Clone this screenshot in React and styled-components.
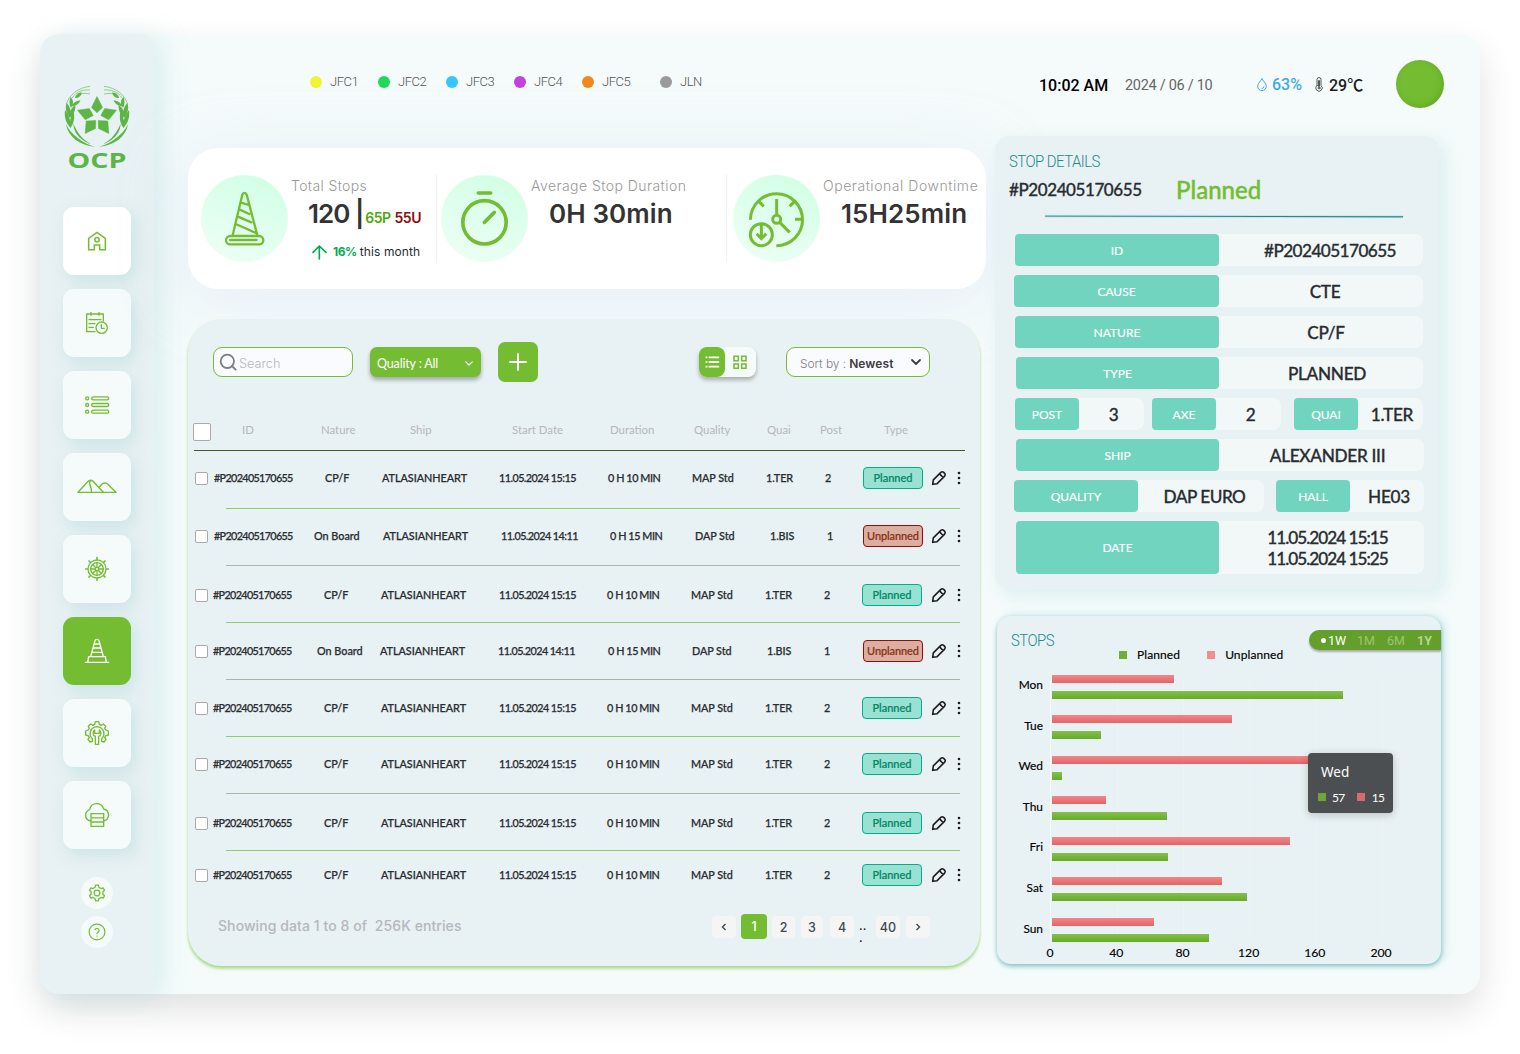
import React from "react";
import styled, { createGlobalStyle, css } from "styled-components";

const green = "#74bd32";
const geo = `"Lato", "Open Sans", sans-serif`;
const wide = `"Inter", "Open Sans", sans-serif`;
const robo = `"Roboto", "Noto Sans CJK SC", sans-serif`;

const Global = createGlobalStyle`
  *, *::before, *::after { box-sizing: border-box; }
  body { margin: 0; background: #fff; font-family: ${geo}; }
  button { border: 0; padding: 0; font: inherit; background: none; cursor: pointer; }
  svg { display: block; overflow: visible; flex: none; }
`;

const Page = styled.div`
  height: 1054px;
  padding: 34px 40px;
  overflow: hidden;
`;
const Shell = styled.div`
  display: flex;
  width: 1440px;
  height: 960px;
  border-radius: 20px;
  background: #f5fbfb;
  box-shadow: 0 16px 36px rgba(0, 0, 0, 0.12);
`;

/* ---------- sidebar ---------- */
const Sidebar = styled.aside`
  flex: none;
  width: 114px;
  height: 960px;
  display: flex;
  flex-direction: column;
  align-items: center;
  padding-top: 51px;
  border-radius: 20px 12px 12px 20px;
  background: #e8f1f3;
  box-shadow: 8px 4px 26px rgba(165, 215, 218, 0.34);
`;
const NavList = styled.nav`
  display: flex;
  flex-direction: column;
  gap: 14px;
  margin-top: 38px;
`;
const NavButton = styled.button`
  width: 68px;
  height: 68px;
  display: grid;
  place-items: center;
  border-radius: 11px;
  color: ${(p) => (p.$active ? "#fff" : green)};
  background: ${(p) => (p.$active ? green : p.$solid ? "#fff" : "#f5fbfb")};
  box-shadow: 4px 6px 16px rgba(150, 205, 208, 0.34);
`;
const SmallList = styled.div`
  display: flex;
  flex-direction: column;
  gap: 7px;
  margin-top: 28px;
`;
const RoundButton = styled.button`
  width: 32px;
  height: 32px;
  display: grid;
  place-items: center;
  border-radius: 50%;
  color: ${green};
  background: #f5fbfb;
`;

/* ---------- header ---------- */
const Main = styled.main`
  flex: 1;
  display: flex;
  flex-direction: column;
`;
const Header = styled.header`
  height: 102px;
  display: flex;
  align-items: center;
  padding: 0 36px 2px 156px;
  font-family: ${robo};
`;
const Legend = styled.div`
  display: grid;
  grid-template-columns: repeat(4, 68px) 78px auto;
  margin-top: -4px;
  width: 729px;
`;
const LegendItem = styled.span`
  display: flex;
  align-items: center;
  gap: 8px;
  font-size: 13px;
  line-height: 16px;
  font-weight: 300;
  letter-spacing: -0.5px;
  color: #555;
  &::before {
    content: "";
    width: 12px;
    height: 12px;
    border-radius: 50%;
    background: ${(p) => p.$c};
  }
`;
const Clock = styled.span`
  width: 86px;
  padding-top: 3px;
  font-size: 16px;
  font-weight: 500;
  letter-spacing: 0;
  color: #000;
  white-space: nowrap;
`;
const DateText = styled.span`
  width: 132px;
  padding-top: 2px;
  font-size: 14.5px;
  letter-spacing: -0.3px;
  color: #666;
`;
const Meter = styled.span`
  display: flex;
  align-items: center;
  gap: ${(p) => p.$gap}px;
  width: ${(p) => p.$w}px;
  font-size: 16px;
  font-weight: 500;
  white-space: nowrap;
  color: ${(p) => p.$c};
`;
const Avatar = styled.span`
  flex: none;
  width: 48px;
  height: 48px;
  border-radius: 50%;
  margin-left: auto;
  background: ${green};
  box-shadow: inset -2px -2px 6px rgba(60, 120, 10, 0.25);
`;

/* ---------- content ---------- */
const Content = styled.div`
  display: flex;
  padding-left: 34px;
`;
const LeftColumn = styled.div`
  width: 798px;
  margin-top: 12px;
`;
const RightColumn = styled.div`
  margin-left: 9px;
`;

const Stats = styled.section`
  display: grid;
  grid-template-columns: 249px 290px auto;
  height: 141px;
  padding-top: 27px;
  border-radius: 30px;
  background: #fff;
  box-shadow: 0 10px 60px rgba(215, 226, 246, 0.5);
  font-family: ${wide};
`;
const Stat = styled.div`
  display: flex;
  height: 88px;
  padding-left: ${(p) => p.$pl}px;
  border-right: ${(p) => (p.$last ? 0 : "1px solid #f0f0f0")};
`;
const StatDisc = styled.div`
  flex: none;
  width: 87px;
  height: 87px;
  border-radius: 50%;
  background: linear-gradient(200deg, #cfffe4 0%, #effff7 100%);
  color: ${green};
`;
const StatBody = styled.div`
  padding-left: 3px;
  white-space: nowrap;
`;
const StatLabel = styled.div`
  font-size: 14px;
  line-height: 22px;
  font-weight: 300;
  letter-spacing: ${(p) => p.$ls || 0}px;
  color: #999;
`;
const StatValue = styled.div`
  display: flex;
  align-items: baseline;
  padding-left: ${(p) => p.$pl}px;
  font-size: 26px;
  line-height: 34px;
  font-weight: 600;
  letter-spacing: ${(p) => p.$ls}px;
  color: #333;
`;
const Split = styled.span`
  margin-left: ${(p) => p.$ml}px;
  font-size: 14px;
  font-weight: 600;
  letter-spacing: -0.5px;
  color: ${(p) => p.$c};
`;
const Trend = styled.div`
  display: flex;
  align-items: center;
  margin-top: 7px;
  padding-left: 21px;
  font-size: 12px;
  line-height: 20px;
  letter-spacing: 0.12px;
  color: #292d32;
  b {
    margin: 0 3px 0 6px;
    letter-spacing: -0.5px;
    color: #00ac4f;
  }
`;

/* ---------- table panel ---------- */
const TablePanel = styled.section`
  width: 792px;
  height: 647px;
  margin-top: 30px;
  padding-top: 23px;
  border-radius: 34px;
  background: #e8f1f3;
  box-shadow: 0 3px 3px rgba(116, 189, 50, 0.45), 0 1px 2px rgba(116, 189, 50, 0.2);
`;
const Toolbar = styled.div`
  display: flex;
  align-items: center;
  height: 40px;
  padding-left: 25px;
  font-family: ${wide};
`;
const SearchBox = styled.div`
  width: 140px;
  height: 30px;
  display: flex;
  align-items: center;
  gap: 1px;
  padding: 1px 0 0 5px;
  border: 1px solid ${green};
  border-radius: 9px;
  background: #fafbff;
  font-size: 12.7px;
  font-weight: 300;
  color: #b5b7c0;
`;
const SearchHint = styled.span`
  padding-top: 2px;
`;
const QualityButton = styled.button`
  width: 111px;
  height: 30px;
  display: flex;
  align-items: center;
  justify-content: space-between;
  margin-left: 17px;
  padding: 2px 8px 0 7px;
  border-radius: 7px;
  background: ${green};
  box-shadow: 0 3px 4px rgba(0, 0, 0, 0.3);
  font-family: ${geo};
  font-size: 12.5px;
  color: #fff;
  letter-spacing: -0.15px;
`;
const AddButton = styled.button`
  width: 40px;
  height: 40px;
  display: grid;
  place-items: center;
  margin-left: 17px;
  border-radius: 7px;
  background: ${green};
`;
const Toggle = styled.div`
  display: flex;
  width: 57px;
  height: 30px;
  margin-left: 161px;
  border-radius: 8px;
  background: #f5fbfb;
  box-shadow: 0 3px 4px rgba(0, 0, 0, 0.28);
`;
const ToggleButton = styled.button`
  width: ${(p) => (p.$on ? 26 : 29)}px;
  display: grid;
  place-items: center;
  border-radius: 8px;
  background: ${(p) => (p.$on ? green : "transparent")};
`;
const SortBox = styled.div`
  width: 144px;
  height: 30px;
  display: flex;
  align-items: center;
  margin-left: 30px;
  padding: 2px 0 0 13px;
  border: 1px solid ${green};
  border-radius: 9px;
  background: #fafbff;
  font-size: 12px;
  font-weight: 300;
  letter-spacing: -0.05px;
  color: #7e7e7e;
  b {
    margin: 0 17px 0 3px;
    font-weight: 600;
    letter-spacing: 0.1px;
    color: #3d3c42;
  }
  svg { margin-top: -3px; }
`;

const HeadRow = styled.div`
  display: grid;
  grid-template-columns: ${(p) => p.$cols};
  align-items: center;
  height: 69px;
  margin: 0 15px 0 6px;
  padding-top: 26px;
  border-bottom: 1px solid #3f5a22;
  font-size: 11.4px;
  color: #b5b7c0;
`;
const Check = styled.span`
  width: ${(p) => p.$s}px;
  height: ${(p) => p.$s}px;
  border: 1px solid #aaa;
  border-radius: 2px;
  background: #fff;
`;
const HeadCheck = styled(Check)`
  margin: 6px 0 0 -1px;
`;
const HeadCell = styled.span`
  white-space: nowrap;
`;
const RowWrap = styled.div`
  height: ${(p) => (p.$first ? 58 : 57)}px;
  display: flex;
  flex-direction: column;
  justify-content: space-between;
`;
const Row = styled.div`
  display: grid;
  grid-template-columns: ${(p) => p.$cols};
  align-items: center;
  height: 22px;
  margin: ${(p) => p.$top}px 0 0 7px;
`;
const Rule = styled.div`
  height: 1px;
  margin: 0 20px 0 38px;
  background: ${(p) => (p.$soft ? "#a3b9a9" : "#8dce68")};
`;
const Cell = styled.span`
  padding-bottom: 1px;
  font-size: 10.8px;
  font-weight: 500;
  letter-spacing: ${(p) => p.$ls}px;
  white-space: nowrap;
  color: #292d32;
  -webkit-text-stroke: 0.25px #292d32;
`;
const Badge = styled.span`
  width: 60px;
  height: 22px;
  display: flex;
  align-items: center;
  justify-content: center;
  padding-bottom: 1px;
  border-radius: 4px;
  font-size: 11px;
  font-weight: 500;
  white-space: nowrap;
  -webkit-text-stroke: 0.2px currentColor;
  ${(p) =>
    p.$bad
      ? css`
          border: 1px solid #960b0b;
          background: #dbaea2;
          color: #8b3013;
          letter-spacing: -0.1px;
        `
      : css`
          border: 1px solid #00b087;
          background: #99e1d2;
          color: #008767;
        `}
`;

const Footer = styled.footer`
  display: flex;
  align-items: flex-start;
  padding: 6px 0 0 30px;
  font-family: ${wide};
`;
const Summary = styled.span`
  width: 494px;
  margin-top: 2px;
  font-size: 14px;
  line-height: 20px;
  font-weight: 500;
  letter-spacing: 0.08px;
  white-space: pre;
  color: #b5b7c0;
`;
const PageButton = styled.button`
  width: ${(p) => p.$w || 24}px;
  height: ${(p) => (p.$on ? 25 : 22)}px;
  display: grid;
  place-items: center;
  margin: ${(p) => (p.$on ? 0 : 2)}px ${(p) => p.$mr || 0}px 0 0;
  border-radius: 4px;
  background: ${(p) => (p.$on ? green : "#f5f5f5")};
  color: ${(p) => (p.$on ? "#fff" : "#404b52")};
  font-size: 12.5px;
  font-weight: 500;
`;
const Ellipsis = styled.span`
  width: 17px;
  font-size: 12px;
  font-weight: 500;
  line-height: 12px;
  margin: 6px 0 0 -1px;
  color: #222;
`;

/* ---------- details panel ---------- */
const DetailPanel = styled.section`
  width: 444px;
  height: 453px;
  padding: 16px 15px 0 14px;
  border-radius: 14px;
  background: #e8f1f3;
  box-shadow: 6px 6px 18px rgba(165, 215, 218, 0.34);
`;
const PanelTitle = styled.h2`
  margin: 0;
  font-family: ${robo};
  font-size: 16px;
  line-height: ${(p) => p.$lh || 20}px;
  font-weight: 300;
  letter-spacing: -0.55px;
  color: #1c8a8c;
  transform: scaleX(0.93);
  transform-origin: left;
`;
const DetailHead = styled.div`
  display: flex;
  align-items: center;
  height: 36px;
`;
const StopId = styled.span`
  width: 167px;
  padding-bottom: 1px;
  font-size: 17px;
  font-weight: 500;
  letter-spacing: -0.42px;
  color: #292d32;
  -webkit-text-stroke: 0.3px #292d32;
`;
const Status = styled.span`
  padding-bottom: 1px;
  font-size: 24px;
  font-weight: 500;
  color: ${green};
  -webkit-text-stroke: 0.4px ${green};
`;
const Slant = styled.div`
  width: 358px;
  height: 1px;
  margin: 8px 0 17px 36px;
  background: linear-gradient(90deg, #3b9ba4, #087f8b);
  box-shadow: 0 0 1px #087f8b;
  transform: rotate(0.12deg);
`;
const Fields = styled.div`
  display: flex;
  flex-direction: column;
  gap: 9px;
  padding-left: 5px;
`;
const FieldLine = styled.div`
  display: flex;
`;
const Field = styled.div`
  display: flex;
  width: ${(p) => p.$w}px;
  height: ${(p) => p.$h || 32}px;
  margin-left: ${(p) => p.$ml || 0}px;
  border-radius: 8px;
  background: #f2f8f8;
`;
const FieldLabel = styled.span`
  flex: none;
  width: ${(p) => p.$w}px;
  display: grid;
  place-items: center;
  border-radius: 4px;
  background: #71d4be;
  font-size: 12px;
  color: #fff;
  -webkit-text-stroke: 0.15px #fff;
`;
const FieldValue = styled.span`
  flex: 1;
  display: flex;
  align-items: center;
  justify-content: center;
  padding-left: ${(p) => p.$pl ?? 8}px;
  font-size: 17.2px;
  line-height: 21px;
  font-weight: 500;
  letter-spacing: ${(p) => p.$ls ?? -0.3}px;
  text-align: center;
  white-space: pre-line;
  color: #292d32;
  -webkit-text-stroke: 0.3px #292d32;
`;

/* ---------- stops chart ---------- */
const ChartPanel = styled.section`
  position: relative;
  width: 444px;
  height: 348px;
  margin: 27px 0 0 2px;
  padding-top: 14px;
  border-radius: 14px;
  background: #e8f1f3;
  box-shadow: 0 2px 4px rgba(8, 127, 139, 0.42), 3px 0 10px rgba(140, 205, 210, 0.45);
`;
const ChartHead = styled.div`
  display: flex;
  justify-content: space-between;
  padding-left: 14px;
  height: 20px;
`;
const RangePill = styled.div`
  display: flex;
  align-items: center;
  width: 132px;
  height: 20px;
  padding-left: 12px;
  border-radius: 10px 0 0 10px;
  background: #649f2b;
  box-shadow: 0 2px 2px rgba(0, 0, 0, 0.28);
  font-family: ${robo};
`;
const RangeItem = styled.span`
  width: ${(p) => p.$w}px;
  font-size: 12.5px;
  font-weight: ${(p) => (p.$bold ? 700 : 400)};
  color: ${(p) => (p.$on ? "#fff" : p.$bold ? "#b4d690" : "#9cc572")};
`;
const Dot = styled.i`
  width: 5px;
  height: 5px;
  margin-right: 2px;
  border-radius: 50%;
  background: #fff;
`;
const Series = styled.div`
  display: flex;
  align-items: center;
  height: 16px;
  margin: -3px 0 0 122px;
  padding-bottom: 1px;
  font-size: 12px;
  letter-spacing: 0.1px;
  color: #000;
  -webkit-text-stroke: 0.15px #000;
`;
const Swatch = styled.i`
  width: 8px;
  height: 8px;
  margin: 0 ${(p) => p.$mr}px 0 ${(p) => p.$ml || 0}px;
  background: ${(p) => p.$c};
`;
const Plot = styled.div`
  margin-top: 11px;
  background: ${() =>
    `linear-gradient(#f5fbfb, #f5fbfb) 53px 6px / 1px 260px no-repeat,
     repeating-linear-gradient(90deg, #ecf4f5 0 1px, transparent 1px 66.2px) 119.5px 6px / 266px 260px no-repeat`};
`;
const DayRow = styled.div`
  display: flex;
  height: 40.6px;
`;
const Day = styled.span`
  width: 46px;
  margin-right: 9px;
  padding-top: 3px;
  font-size: 11.9px;
  line-height: 16px;
  text-align: right;
  color: #000;
  -webkit-text-stroke: 0.15px #000;
`;
const Bars = styled.div`
  display: flex;
  flex-direction: column;
  gap: 8px;
  padding-top: 0.5px;
`;
const Bar = styled.i`
  height: 8px;
  background: ${(p) =>
    p.$red ? "linear-gradient(#f38588, #e36567)" : "linear-gradient(#84c04a, #68aa2c)"};
`;
const Axis = styled.div`
  display: grid;
  grid-template-columns: repeat(6, 66.2px);
  margin: -13px 0 0 20px;
  font-size: 12.2px;
  line-height: 16px;
  text-align: center;
  color: #000;
  -webkit-text-stroke: 0.15px #000;
`;
const Tooltip = styled.div`
  position: absolute;
  left: 311px;
  top: 137px;
  width: 85px;
  height: 60px;
  padding: 10px 0 0 10px;
  border-radius: 4px;
  background: #4b4f51;
  box-shadow: 0 2px 8px rgba(0, 0, 0, 0.2);
  color: #fff;
`;
const TipTitle = styled.div`
  padding-left: 3px;
  font-family: "Noto Sans", sans-serif;
  font-size: 13.5px;
  line-height: 18px;
`;
const TipValues = styled.div`
  display: flex;
  align-items: center;
  height: 16px;
  margin-top: 8px;
  font-size: 12px;
  letter-spacing: -0.6px;
`;

/* ---------- drawings ---------- */
const Stroke = ({ size = 24, h, box = "0 0 72 72", w = 4, children }) => (
  <svg width={size} height={h || size} viewBox={box} fill="none" stroke="currentColor" strokeWidth={w} strokeLinecap="round" strokeLinejoin="round">
    {children}
  </svg>
);

const gearPath = (c, teeth, rOut, rIn) => {
  const pts = [];
  const step = (Math.PI * 2) / teeth;
  for (let i = 0; i < teeth; i++) {
    const a = i * step - Math.PI / 2;
    [[-0.3, rIn], [-0.17, rOut], [0.17, rOut], [0.3, rIn]].forEach(([o, r]) => {
      pts.push(`${(c + r * Math.cos(a + o * step)).toFixed(1)} ${(c + r * Math.sin(a + o * step)).toFixed(1)}`);
    });
  }
  return `M${pts.join("L")}Z`;
};
const rays = (c, n, r1, r2) =>
  Array.from({ length: n }, (_, i) => {
    const a = (i * Math.PI * 2) / n;
    return `M${c + r1 * Math.cos(a)} ${c + r1 * Math.sin(a)}L${c + r2 * Math.cos(a)} ${c + r2 * Math.sin(a)}`;
  }).join("");

const Wreath = () => (
  <>
    <path d="M95 146.8C80 145.500 68.500 137.500 65.800 124C71.500 135 82 143 95 146.800Z" />
    <path d="M89 143.500C79 139 73.500 132 73.300 123.500C77.500 133 82 139.500 90.500 143.500Z" />
    <path d="M65 110C69 115 71 120 70.500 128C66 123 64 117 65 110ZM73.500 111C75 118 74 123 70.500 128C69.500 121 70.500 115 73.500 111Z" />
    <path d="M66.500 103C70.500 107 71.500 111 70 118C66 113 65 108 66.500 103ZM75.500 105C75.500 110 74 114 70 117.500C69.500 111 71.500 107.500 75.500 105Z" />
    <path d="M70.500 97C74 100 73.500 104 71 108C69 104 69 101 70.500 97ZM80.500 100.500C79 104 75.500 106 71.500 106.500C73 103 76 100.500 80.500 100.500Z" />
    <path d="M75 98C75.500 94.500 78.500 92.500 81.800 92.500C81.500 96 78.500 98 75 98Z" />
    <path d="M66.500 104C69 95 78 87.500 90 86.400M72 98C76 91.500 83 89.500 90 90M80 94C83 93 87 93.300 90 94" fill="none" stroke="#5cb544" strokeWidth="0.6" />
  </>
);
const Logo = () => (
  <svg width="66" height="84" viewBox="64 85 66 84" fill="#5cb544">
    <Wreath />
    <g transform="translate(194 0) scale(-1 1)"><Wreath /></g>
    <g stroke="#5cb544" strokeWidth="0.5">
      <path d="M97 96.500L102.500 107.500L97 112.800L91.500 107.500Z" />
      <path d="M77.500 110.200L89.300 108.500L93.200 115.600L85.300 119.800Z" />
      <path d="M116.500 110.200L104.700 108.500L100.800 115.600L108.700 119.800Z" />
      <path d="M85.200 133.500L86.200 121L95.800 120.600L95.500 128.500Z" />
      <path d="M108.800 133.500L107.800 121L98.200 120.600L98.500 128.500Z" />
    </g>
    <text x="67.500" y="167.700" fontFamily="Open Sans, sans-serif" fontWeight="700" fontSize="21.800" textLength="59" lengthAdjust="spacingAndGlyphs">OCP</text>
  </svg>
);

const navItems = [
  { key: "home", solid: true, icon: (
    <Stroke w={4.6}><path strokeLinejoin="miter" d="M11 62V28L36 10L61 28V62H44V48H28V62Z" /><circle cx="36" cy="32" r="6.500" /></Stroke>
  ) },
  { key: "planning", icon: (
    <Stroke><path d="M30 62H5V9H55V30M18 4V13M42 4V13M12 26H48M12 38H30M12 49H25" /><circle cx="50" cy="50" r="17" /><path d="M49 41V52H58" /></Stroke>
  ) },
  { key: "list", icon: (
    <Stroke>{[16, 36, 56].map((y) => <g key={y}><circle cx="6.500" cy={y} r="4.500" /><rect x="20" y={y - 4.5} width="51" height="9" rx="4.500" /></g>)}</Stroke>
  ) },
  { key: "terrain", icon: (
    <Stroke size={40} h={24} box="0 0 120 72" w={4.200}><path d="M3 52L32 20Q40 12 48 19L79 52M67 37L73 29Q83 19 94 29L117 52H3M39 17C33 31 46 34 43 52" /></Stroke>
  ) },
  { key: "helm", icon: (
    <Stroke><circle cx="36" cy="36" r="27" /><circle cx="36" cy="36" r="19" /><circle cx="36" cy="36" r="5" /><path d={rays(36, 8, 6, 19)} /><path strokeWidth="5" d={rays(36, 8, 29, 34)} /></Stroke>
  ) },
  { key: "stops", active: true, icon: (
    <Stroke><path d="M1 70H71M8 70L11 53H61L64 70M17 53L30 5Q31 1 36 1Q41 1 42 5L55 53M28 15H44M25 27H47M21 40H51" /></Stroke>
  ) },
  { key: "maintenance", icon: (
    <Stroke>
      <path d="M22 61L15 63L9 55L13 49L9 44L2 42V30L9 27L13 22L10 16L17 9L24 13L29 10L31 2H41L43 10L48 13L55 9L62 16L59 22L63 27L70 30V42L63 44L59 49L63 55L57 63L50 61" />
      <path d="M22 61V53C11 44 13 19 36 17C59 19 61 44 50 53V61" />
      <path d="M31 70V46C22 43 23 32 29 27V37H43V27C49 32 50 43 41 46V70Z" />
    </Stroke>
  ) },
  { key: "storage", icon: (
    <Stroke><path d="M18 54C6 52 1.500 45 2 36C2.500 28 8 22 14 20C17 7 26 2 35 2C45 2 53 8 56 18C66 20 70.500 28 70.500 37C70 46 65 52 56 54" /><path strokeLinejoin="miter" d="M18 32H56V70H18ZM18 44.500H56M18 57H56" /></Stroke>
  ) },
];

const StatIcon = ({ box, w, children }) => <Stroke size={87} box={box} w={w}>{children}</Stroke>;

const Pencil = () => (
  <svg width="16" height="16" viewBox="0 0 24 24" fill="none" stroke="#1d1d1f" strokeWidth="2.400" strokeLinejoin="round" strokeLinecap="round">
    <path d="M2.500 21.500L3.500 14.800L14.800 3.500Q17 1.800 19 3.500L20.500 5Q22.200 7 20.500 9.200L9.200 20.500ZM12.800 5.800L18.200 11.200" />
  </svg>
);
const Kebab = () => (
  <svg width="4" height="14" viewBox="0 0 4 14" fill="#1d1d1f"><circle cx="2" cy="2" r="1.300" /><circle cx="2" cy="7" r="1.300" /><circle cx="2" cy="12" r="1.300" /></svg>
);
const Chevron = ({ w, sw, c }) => (
  <svg width={w} height={w * 0.6} viewBox="0 0 10 6" fill="none" stroke={c} strokeWidth={sw} strokeLinecap="round" strokeLinejoin="round"><path d="M1 1L5 5L9 1" /></svg>
);
const PageArrow = ({ d }) => (
  <svg width="6" height="8" viewBox="0 0 6 8" fill="none" stroke="#404b52" strokeWidth="1.400"><path d={d} /></svg>
);

/* column widths from the x positions at which the columns start */
const template = (starts, origin) =>
  [origin, ...starts].map((s, i) => (i < starts.length ? `${starts[i] - s}px` : "auto")).join(" ");

const headings = ["ID", "Nature", "Ship", "Start Date", "Duration", "Quality", "Quai", "Post", "Type"];
const headStarts = [242, 321, 410, 512, 610, 694, 767, 820, 884];

const startSets = {
  a: [214, 325, 382, 499, 608, 692, 766, 825, 863, 931, 957],
  b: [214, 314, 383, 501, 610, 695, 770, 827, 863, 931, 957],
  c: [213, 324, 381, 499, 607, 691, 765, 824, 862, 931, 957],
  d: [213, 317, 380, 498, 608, 692, 767, 824, 863, 931, 957],
};
const spacing = [-0.66, 0, -0.02, -0.55, -0.42, -0.05, -0.1, 0];
const planned = ["#P202405170655", "CP/F", "ATLASIANHEART", "11.05.2024 15:15", "0 H 10 MIN", "MAP Std", "1.TER", "2"];
const unplanned = ["#P202405170655", "On Board", "ATLASIANHEART", "11.05.2024 14:11", "0 H 15 MIN", "DAP Std", "1.BIS", "1"];
const rows = [
  { set: "a", top: 16 },
  { set: "b", top: 16, bad: true },
  { set: "c", top: 18 },
  { set: "d", top: 17, bad: true },
  { set: "c", top: 17 },
  { set: "c", top: 16 },
  { set: "c", top: 18 },
  { set: "c", top: 13 },
];

const days = [
  ["Mon", 122, 290.5],
  ["Tue", 180, 49],
  ["Wed", 270, 10],
  ["Thu", 54, 115],
  ["Fri", 238, 116],
  ["Sat", 170, 195],
  ["Sun", 102, 157],
];

const DetailField = ({ label, value, w, lw, h, ml, ls, pl }) => (
  <Field $w={w} $h={h} $ml={ml}>
    <FieldLabel $w={lw}>{label}</FieldLabel>
    <FieldValue $ls={ls} $pl={pl}>{value}</FieldValue>
  </Field>
);

export default function App() {
  return (
    <Page>
      <Global />
      <Shell>
        <Sidebar>
          <Logo />
          <NavList>
            {navItems.map((n) => (
              <NavButton key={n.key} $active={n.active} $solid={n.solid} aria-label={n.key}>{n.icon}</NavButton>
            ))}
          </NavList>
          <SmallList>
            <RoundButton aria-label="settings">
              <Stroke size={18} box="0 0 54 54" w={3.8}><path d={gearPath(27, 6, 24, 18)} /><circle cx="27" cy="27" r="8.500" /></Stroke>
            </RoundButton>
            <RoundButton aria-label="help">
              <Stroke size={18} box="0 0 24 24" w={1.6}><circle cx="12" cy="12" r="10.500" /><path d="M9.200 9a3 3 0 0 1 5.700 1c0 2-2.900 2.400-2.900 4.200M12 17.500h.01" /></Stroke>
            </RoundButton>
          </SmallList>
        </Sidebar>

        <Main>
          <Header>
            <Legend>
              <LegendItem $c="#f0f533">JFC1</LegendItem>
              <LegendItem $c="#20d85a">JFC2</LegendItem>
              <LegendItem $c="#37c5ff">JFC3</LegendItem>
              <LegendItem $c="#c440e0">JFC4</LegendItem>
              <LegendItem $c="#f0891d">JFC5</LegendItem>
              <LegendItem $c="#9b9b9b">JLN</LegendItem>
            </Legend>
            <Clock>10:02 AM</Clock>
            <DateText>2024 / 06 / 10</DateText>
            <Meter $c="#45a9dd" $gap={5} $w={58}>
              <Stroke size={10} h={13} box="0 0 10 13" w={1}><path d="M5 1C2.500 4 .7 6.200 .7 8.300A4.300 4.300 0 0 0 9.300 8.300C9.300 6.200 7.500 4 5 1ZM5 10.500A2 2 0 0 0 7 8.700" /></Stroke>
              63%
            </Meter>
            <Meter $c="#1b1b1b" $gap={6} $w={60}>
              <Stroke size={8} h={15} box="0 0 8 15" w={0.9}><g stroke="#444"><path d="M2 8.500V2.500A2 2 0 0 1 6 2.500V8.500A3.200 3.200 0 1 1 2 8.500Z" /><path strokeWidth="1.800" d="M4 4V9" /><circle cx="4" cy="11" r="1" /></g></Stroke>
              29℃
            </Meter>
            <Avatar />
          </Header>

          <Content>
            <LeftColumn>
              <Stats>
                <Stat $pl={13}>
                  <StatDisc>
                    <StatIcon box="63 105 261 261" w={7}>
                      <rect x="138" y="288" width="112" height="25" rx="12.500" /><path d="M150 300H230M158 286L187 164Q193 153 200 164L232 286M183 188L203 194M179 209L208 222M174 230L214 247M167 252L230 280" />
                    </StatIcon>
                  </StatDisc>
                  <StatBody>
                    <StatLabel $ls={0.36}>Total Stops</StatLabel>
                    <StatValue $pl={17} $ls={-1}>120 |<Split $c="#4ea908" $ml={2}>65P</Split><Split $c="#8b0d0d" $ml={4}>55U</Split></StatValue>
                    <Trend>
                      <Stroke size={15} box="0 0 45 45" w={5}><path d="M22 42V3M3 22L22 3L42 22" stroke="#00ac4f" /></Stroke>
                      <b>16%</b>this month
                    </Trend>
                  </StatBody>
                </Stat>
                <Stat $pl={4}>
                  <StatDisc>
                    <StatIcon box="783 105 261 261" w={11}><path d="M895 159H932M913 247L943 217" /><circle cx="913.500" cy="247" r="65" /></StatIcon>
                  </StatDisc>
                  <StatBody>
                    <StatLabel $ls={0.45}>Average Stop Duration</StatLabel>
                    <StatValue $pl={18} $ls={0.1}>0H 30min</StatValue>
                  </StatBody>
                </Stat>
                <Stat $pl={6} $last>
                  <StatDisc>
                    <StatIcon box="459 105 261 261" w={9}>
                      <g strokeLinecap="butt"><path d="M511.500 239A78 78 0 1 1 589 317M537 185L551 199M643 185L629 199M645 238H668M590 177V226M600 248L629 277M544 252V295M530 281L544 296L559 281" strokeLinejoin="miter" /></g>
                      <circle cx="590" cy="238" r="12" /><circle cx="544" cy="284" r="33" />
                    </StatIcon>
                  </StatDisc>
                  <StatBody>
                    <StatLabel $ls={0.55}>Operational Downtime</StatLabel>
                    <StatValue $pl={18} $ls={0.1}>15H25min</StatValue>
                  </StatBody>
                </Stat>
              </Stats>

              <TablePanel>
                <Toolbar>
                  <SearchBox>
                    <Stroke size={19} box="0 0 57 57" w={5.4}><g stroke="#7e7e7e"><circle cx="25" cy="25" r="20" /><path d="M39 39L50 50" /></g></Stroke>
                    <SearchHint>Search</SearchHint>
                  </SearchBox>
                  <QualityButton><span>Quality : All</span><Chevron w={8} sw={1.5} c="#fff" /></QualityButton>
                  <AddButton aria-label="add"><Stroke size={18} box="0 0 18 18" w={2}><path d="M9 1V17M1 9H17" stroke="#fff" /></Stroke></AddButton>
                  <Toggle>
                    <ToggleButton $on aria-label="list view"><Stroke size={14} box="0 0 42 42" w={5.5}><path stroke="#fff" d="M13 7H40M13 21H40M13 35H40M4 7H5M4 21H5M4 35H5" /></Stroke></ToggleButton>
                    <ToggleButton aria-label="grid view"><Stroke size={14} box="0 0 42 42" w={4.6}><path strokeLinejoin="miter" stroke={green} d="M3 4H16V17H3ZM26 4H39V17H26ZM3 27H16V40H3ZM26 27H39V40H26Z" /></Stroke></ToggleButton>
                  </Toggle>
                  <SortBox>Sort by : <b>Newest</b><Chevron w={10} sw={1.8} c="#3d3c42" /></SortBox>
                </Toolbar>

                <HeadRow $cols={template(headStarts, 194)}>
                  <HeadCheck $s={18} />
                  {headings.map((h) => <HeadCell key={h}>{h}</HeadCell>)}
                </HeadRow>
                {rows.map((r, i) => (
                  <RowWrap key={i} $first={i === 0}>
                    <Row $top={r.top} $cols={template(startSets[r.set], 195)}>
                      <Check $s={13} />
                      {(r.bad ? unplanned : planned).map((t, j) => <Cell key={j} $ls={spacing[j]}>{t}</Cell>)}
                      <Badge $bad={r.bad}>{r.bad ? "Unplanned" : "Planned"}</Badge>
                      <Pencil />
                      <Kebab />
                    </Row>
                    {i < rows.length - 1 && <Rule $soft={i % 2 === 1} />}
                  </RowWrap>
                ))}
                <Footer>
                  <Summary>Showing data 1 to 8 of  256K entries</Summary>
                  <PageButton $mr={5} aria-label="previous"><PageArrow d="M4.500 1L1.500 4L4.500 7" /></PageButton>
                  <PageButton $on $w={26} $mr={5}>1</PageButton>
                  <PageButton $w={23} $mr={6}>2</PageButton>
                  <PageButton $w={22} $mr={7}>3</PageButton>
                  <PageButton $mr={6}>4</PageButton>
                  <Ellipsis>..<br />.</Ellipsis>
                  <PageButton $mr={6}>40</PageButton>
                  <PageButton aria-label="next"><PageArrow d="M1.500 1L4.500 4L1.500 7" /></PageButton>
                </Footer>
              </TablePanel>
            </LeftColumn>

            <RightColumn>
              <DetailPanel>
                <PanelTitle>STOP DETAILS</PanelTitle>
                <DetailHead><StopId>#P202405170655</StopId><Status>Planned</Status></DetailHead>
                <Slant />
                <Fields>
                  <DetailField label="ID" value="#P202405170655" w={408} lw={204} ml={1} ls={-0.57} pl={18} />
                  <DetailField label="CAUSE" value="CTE" w={409} lw={205} />
                  <DetailField label="NATURE" value="CP/F" w={408} lw={204} ml={1} pl={10} />
                  <DetailField label="TYPE" value="PLANNED" w={407} lw={203} ml={2} pl={12} />
                  <FieldLine>
                    <DetailField label="POST" value="3" w={129} lw={64} ml={1} pl={4} />
                    <DetailField label="AXE" value="2" w={129} lw={64} ml={8} pl={4} />
                    <DetailField label="QUAI" value="1.TER" w={129} lw={64} ml={13} pl={3} />
                  </FieldLine>
                  <DetailField label="SHIP" value="ALEXANDER III" w={408} lw={203} ml={2} pl={12} />
                  <FieldLine>
                    <DetailField label="QUALITY" value="DAP EURO" w={250} lw={124} pl={7} ls={-0.5} />
                    <DetailField label="HALL" value="HE03" w={148} lw={74} ml={12} pl={4} />
                  </FieldLine>
                  <DetailField label="DATE" value={"11.05.2024 15:15\n11.05.2024 15:25"} w={408} lw={203} h={53} ml={2} pl={12} ls={-1} />
                </Fields>
              </DetailPanel>

              <ChartPanel>
                <ChartHead>
                  <PanelTitle $lh={22}>STOPS</PanelTitle>
                  <RangePill>
                    <Dot />
                    <RangeItem $on $w={29}>1W</RangeItem>
                    <RangeItem $w={30}>1M</RangeItem>
                    <RangeItem $w={30}>6M</RangeItem>
                    <RangeItem $bold>1Y</RangeItem>
                  </RangePill>
                </ChartHead>
                <Series>
                  <Swatch $c="#6fae38" $mr={10} />Planned
                  <Swatch $c="#f58d8e" $mr={10} $ml={27} />Unplanned
                </Series>
                <Plot>
                  {days.map(([d, red, grn]) => (
                    <DayRow key={d}>
                      <Day>{d}</Day>
                      <Bars>
                        <Bar $red style={{ width: red }} />
                        <Bar style={{ width: grn }} />
                      </Bars>
                    </DayRow>
                  ))}
                </Plot>
                <Axis>{[0, 40, 80, 120, 160, 200].map((n) => <span key={n}>{n}</span>)}</Axis>
                <Tooltip>
                  <TipTitle>Wed</TipTitle>
                  <TipValues>
                    <Swatch $c="#6fa63c" $mr={6} />57
                    <Swatch $c="#d96b6d" $mr={7} $ml={12} />15
                  </TipValues>
                </Tooltip>
              </ChartPanel>
            </RightColumn>
          </Content>
        </Main>
      </Shell>
    </Page>
  );
}
